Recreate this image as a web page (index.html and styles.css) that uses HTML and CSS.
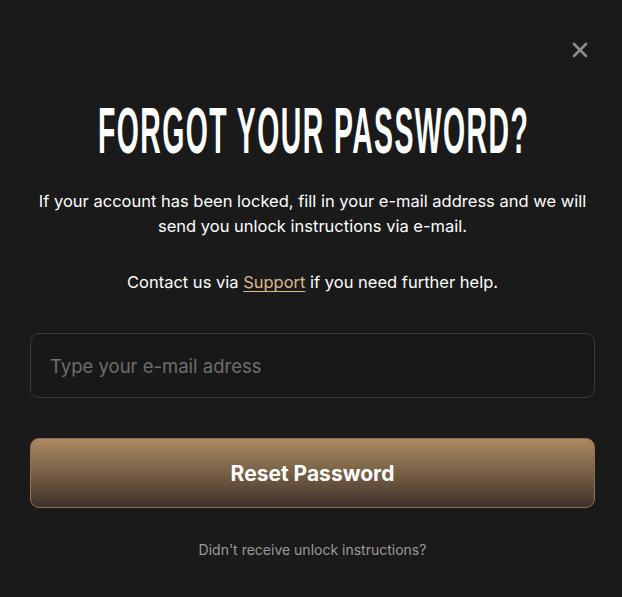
FILE: index.html
```html
<!DOCTYPE html>
<html lang="en">

<head>
  <meta charset="UTF-8">
  <meta name="viewport" content="width=device-width, initial-scale=1.0">
  <title>Forgot your password</title>
  <link rel="stylesheet" href="styles.css">
</head>

<body>
  <div class="modal">
    <div class="top">
      <button class="close" aria-label="Close">
        <svg width="16" height="16" viewBox="0 0 16 16">
          <path d="M2 2 L14 14 M14 2 L2 14" stroke="#8c8c8c" stroke-width="2.6" stroke-linecap="round" />
        </svg>
      </button>
    </div>

    <h1 class="titre"><span>FORGOT YOUR PASSWORD?</span></h1>

    <p class="texte">If your account has been locked, fill in your e-mail address and we will send you unlock instructions via e-mail.</p>
    <p class="texte contact">Contact us via <a href="#">Support</a> if you need further help.</p>

    <input class="champ" type="email" placeholder="Type your e-mail adress">

    <button class="bouton">Reset Password</button>

    <div class="aide">Didn't receive unlock instructions?</div>
  </div>
</body>

</html>
```

FILE: styles.css
```css
body {
  margin: 0;
  background-color: #1a1a1a;
  font-family: Inter, "Noto Sans", sans-serif;
  color: #fff;
}

.modal {
  display: flex;
  flex-direction: column;
  padding: 0 27px 0 30px;
}

.top {
  display: flex;
  justify-content: flex-end;
  padding-top: 42px;
  padding-right: 7px;
}

.close {
  background: none;
  border: 0;
  padding: 0;
  width: 16px;
  height: 16px;
  cursor: pointer;
}

.close svg {
  display: block;
}

.titre {
  display: flex;
  justify-content: center;
  margin: 42px 0 0;
  white-space: nowrap;
  font-family: "Liberation Sans Narrow", "Liberation Sans", sans-serif;
  font-weight: 700;
  font-size: 40px;
  line-height: 60px;
  letter-spacing: 2px;
}

.titre span {
  flex-shrink: 0;
  margin-right: -2px;
  transform: scale(0.71, 1.62);
}

.texte {
  margin: 0;
  text-align: center;
  font-size: 16.5px;
  line-height: 25px;
}

.texte:first-of-type {
  margin-top: 29px;
}

.contact {
  margin-top: 31px;
}

.contact a {
  color: #d9b98e;
  text-decoration: underline;
  text-underline-offset: 3px;
}

.champ {
  margin-top: 38px;
  height: 65px;
  box-sizing: border-box;
  background-color: #181818;
  border: 1px solid #3a3a3a;
  border-radius: 9px;
  padding: 0 19px;
  font-family: inherit;
  font-size: 18.5px;
  color: #fff;
  outline: none;
}

.champ::placeholder {
  color: #6e6e6e;
}

.bouton {
  margin-top: 40px;
  height: 70px;
  border: 1px solid #8c7254;
  border-radius: 9px;
  background: linear-gradient(to bottom, #aa8960 0%, #7c6449 45%, #3f312a 100%);
  color: #fff;
  font-family: inherit;
  font-weight: 700;
  font-size: 21px;
  cursor: pointer;
}

.aide {
  margin-top: 33px;
  text-align: center;
  font-size: 14px;
  color: #9a9a9a;
}
```
